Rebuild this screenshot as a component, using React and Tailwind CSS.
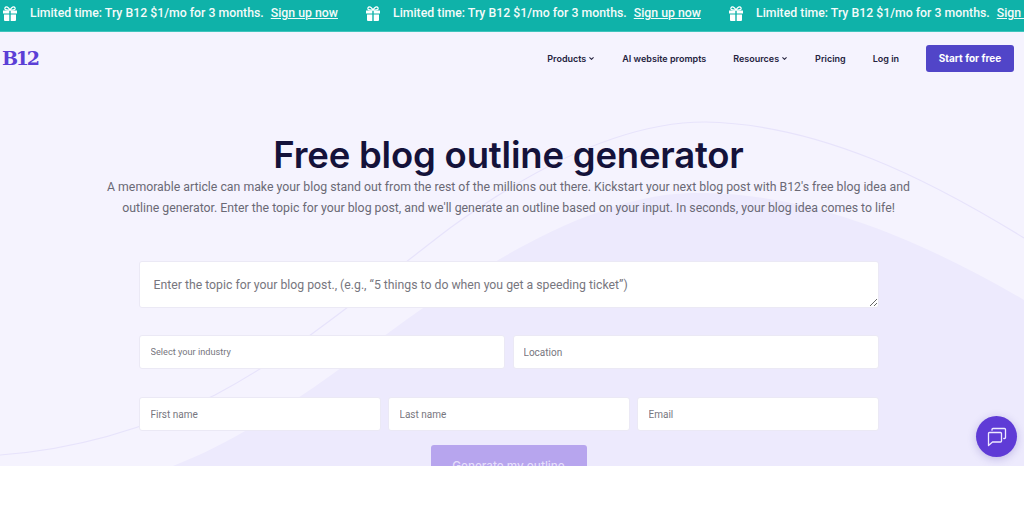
import React from "react";
import { ChevronDown } from "lucide-react";

const Gift = () => (
  <svg width="16" height="16" viewBox="0 0 16 16" fill="#fff" className="shrink-0">
    <path d="M1 4.4h6.300v3H1zM8.700 4.400H15v3H8.700zM2 8.600h5.300V15H3a1 1 0 0 1-1-1zM8.700 8.600H14V14a1 1 0 0 1-1 1H8.700z" />
    <path d="M8 4.200C6.800 1.800 5.600.8 4.400.9 3.200 1 2.700 2 3 3c.3.900 1.300 1.200 5 1.200zm0 0c1.200-2.400 2.400-3.400 3.600-3.300 1.200.1 1.700 1.100 1.400 2.100-.3.900-1.300 1.200-5 1.200z" fill="none" stroke="#fff" strokeWidth="1.300" />
  </svg>
);

const Promo = () => (
  <div className="flex items-center shrink-0 w-[363px] pl-[2px] gap-[12px]">
    <Gift />
    <span className="text-[12.3px] font-medium text-[#f4fbfa] whitespace-nowrap">Limited time: Try B12 $1/mo for 3 months.</span>
    <a className="text-[12.3px] font-medium text-[#f4fbfa] underline whitespace-nowrap -ml-[5px]">Sign up now</a>
  </div>
);

const NavItem = ({ children, caret }) => (
  <a className="flex items-center gap-[2px] text-[9px] font-semibold text-[#25233f] whitespace-nowrap font-['Inter',sans-serif]">
    {children}
    {caret && <ChevronDown size={7} strokeWidth={3.500} />}
  </a>
);

const field = "h-[34px] min-w-0 bg-white border border-[#ebe9f5] rounded-[3px] px-[11px] text-[10px] outline-none placeholder:text-[#77767e] text-[#77767e]";

export default function App() {
  return (
    <div className="h-[512px] bg-white overflow-hidden font-['Roboto',sans-serif]">
      <div className="relative h-[466px] overflow-hidden bg-[#f5f3fe]">
        <svg className="absolute inset-0" width="1024" height="466" viewBox="0 0 1024 466" fill="none">
          <path d="M173 466C260 432 335 372 406 320C480 268 590 196 690 193C810 190 930 245 1024 300V466Z" fill="#edeafd" />
          <path d="M0 455C70 450 140 432 215 395C300 350 375 285 450 228C530 170 620 122 705 122C820 124 930 180 1024 238" stroke="#e7e3fb" strokeWidth="1.200" />
        </svg>

        <div className="relative flex flex-col h-full">
          <div className="flex items-center h-[32px] pb-[4px] bg-[#0fb2a9] border-b border-[#3fc4bc] overflow-hidden shrink-0">
            <Promo /><Promo /><Promo />
          </div>

          <header className="flex items-center h-[52px] pl-[2px] pr-[10px] shrink-0">
            <span className="text-[#5b3fd6] text-[19px] font-bold leading-none font-['DejaVu_Serif',serif] tracking-[-2.300px] mt-[1px]">B12</span>
            <nav className="ml-auto flex items-center">
              <div className="flex items-center gap-[27px] mr-[27px] mt-[1px]">
                <NavItem caret>Products</NavItem>
                <NavItem>AI website prompts</NavItem>
                <NavItem caret>Resources</NavItem>
                <NavItem>Pricing</NavItem>
                <NavItem>Log in</NavItem>
              </div>
              <button className="w-[88px] h-[27px] bg-[#5145c8] rounded-[3px] text-white text-[10px] font-bold font-['Inter',sans-serif]">Start for free</button>
            </nav>
          </header>

          <main className="flex flex-col items-center pt-[47px] pr-[7px]">
            <h1 className="text-[36.5px] leading-[48px] font-semibold text-[#14123a] font-['Inter',sans-serif] whitespace-nowrap tracking-[-0.2px]">Free blog outline generator</h1>
            <p className="-mt-[2px] w-[815px] text-center text-[12.3px] leading-[21px] text-[#6a6975]">
              A memorable article can make your blog stand out from the rest of the millions out there. Kickstart your next blog post with B12's free blog idea and outline generator. Enter the topic for your blog post, and we'll generate an outline based on your input. In seconds, your blog idea comes to life!
            </p>

            <form className="w-[740px] mt-[42px] flex flex-col">
              <textarea
                className="block w-full h-[47px] bg-white border border-[#ebe9f5] rounded-[3px] px-[14px] py-[15px] text-[12.25px] leading-[16px] outline-none placeholder:text-[#77767e]"
                placeholder="Enter the topic for your blog post., (e.g., “5 things to do when you get a speeding ticket”)"
              />
              <div className="grid grid-cols-[366px_1fr] gap-[8px] mt-[27px]">
                <select className={`${field} appearance-none !text-[9.200px]`} defaultValue="">
                  <option value="">Select your industry</option>
                </select>
                <input className={`${field} !px-[10px]`} placeholder="Location" />
              </div>
              <div className="grid grid-cols-3 gap-[7px] mt-[28px]">
                <input className={field} placeholder="First name" />
                <input className={field} placeholder="Last name" />
                <input className={field} placeholder="Email" />
              </div>
              <button type="button" className="self-center mt-[14px] w-[156px] h-[40px] pt-[3px] shrink-0 bg-[#b7a5ee] rounded-[3px] text-[#e6dffb] text-[11.700px] font-medium font-['Inter',sans-serif]">Generate my outline</button>
            </form>
          </main>
        </div>

        <button className="absolute left-[976px] top-[416px] w-[41px] h-[41px] rounded-full bg-[#5f3bd6] flex items-center justify-center shadow-[0_2px_8px_rgba(60,40,160,0.25)]">
          <svg width="20" height="20" viewBox="0 0 20 20" fill="none" stroke="#efeaff" strokeWidth="1.300" strokeLinejoin="round" strokeLinecap="round">
            <path d="M1.500 6.500a1 1 0 0 1 1-1h11a1 1 0 0 1 1 1v7.500a1 1 0 0 1-1 1H5.500l-4 3.500z" />
            <path d="M5 3.200V2.500a1 1 0 0 1 1-1h11.500a1 1 0 0 1 1 1v8a1 1 0 0 1-1 1h-.7" />
          </svg>
        </button>
      </div>
    </div>
  );
}
